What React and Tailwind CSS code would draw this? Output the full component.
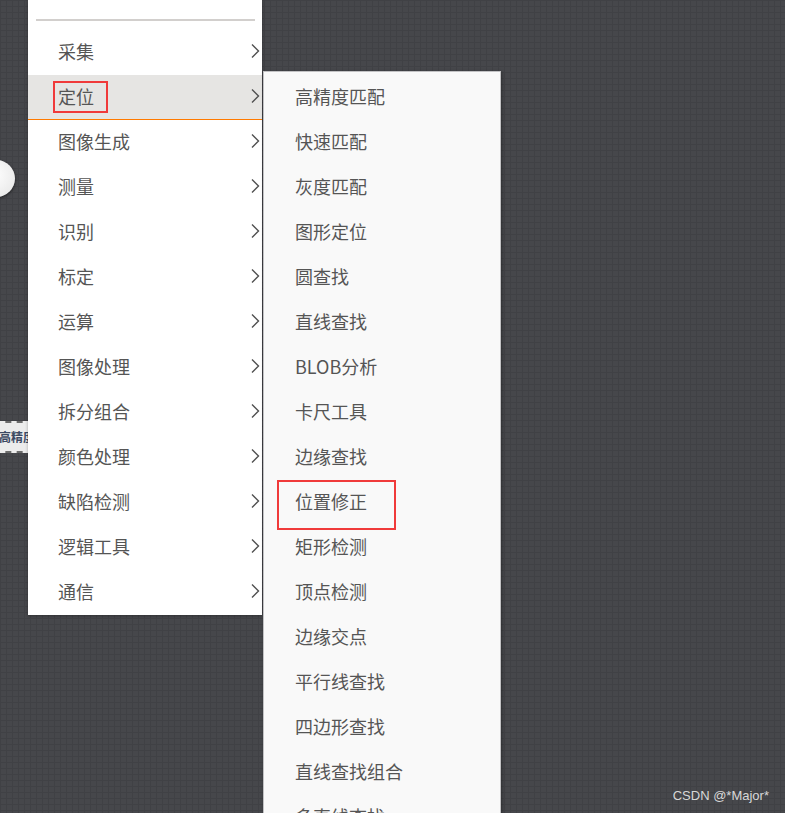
import React from 'react'

const mainItems = [
	'采集',
	'定位',
	'图像生成',
	'测量',
	'识别',
	'标定',
	'运算',
	'图像处理',
	'拆分组合',
	'颜色处理',
	'缺陷检测',
	'逻辑工具',
	'通信',
]

const subItems = [
	'高精度匹配',
	'快速匹配',
	'灰度匹配',
	'图形定位',
	'圆查找',
	'直线查找',
	'BLOB分析',
	'卡尺工具',
	'边缘查找',
	'位置修正',
	'矩形检测',
	'顶点检测',
	'边缘交点',
	'平行线查找',
	'四边形查找',
	'直线查找组合',
	'多直线查找',
]

const font = { fontFamily: '"Microsoft YaHei", "Noto Sans CJK SC", "Noto Sans", sans-serif' }

// thin ">" arrow used by the main menu rows
const Arrow = () => (
	<svg width="10" height="16" viewBox="0 0 10 16" className="shrink-0">
		<polyline points="2,1.5 8.5,8 2,14.5" fill="none" stroke="#505050" strokeWidth="1.4" />
	</svg>
)

const App = () => {
	return (
		<div
			className="relative w-[785px] h-[813px] overflow-hidden bg-[#46474b] bg-[linear-gradient(#404145_1px,transparent_1px),linear-gradient(90deg,#404145_1px,transparent_1px)] bg-[size:6px_6px]"
			style={font}
		>
			{/* canvas node: circle */}
			<div className="absolute left-[-22px] top-[160px] w-[37px] h-[37px] rounded-full bg-[radial-gradient(circle_at_40%_40%,#ffffff,#e4e4e4)] shadow-[0_1px_3px_rgba(0,0,0,0.6)]" />

			{/* canvas node: dashed box */}
			<div className="absolute left-[-6px] top-[421px] w-[40px] h-[32px] bg-[#ececec] border-y-2 border-dashed border-[#6b6b6b] flex items-center pl-[5px]">
				<span className="text-[12px] font-bold text-[#3c4a63] whitespace-nowrap leading-none">高精度</span>
			</div>

			{/* main menu */}
			<div className="absolute left-[28px] top-0 w-[234px] bg-white shadow-[0_1px_3px_rgba(0,0,0,0.3)]">
				<div className="h-[30px] pt-[19px] pr-[7px] pl-[8px]">
					<div className="h-[2px] bg-[#d2cfcd]" />
				</div>
				{mainItems.map((item, i) => (
					<div
						key={item}
						className={`h-[45px] flex items-center justify-between pl-[30px] pr-[2px] pb-[3px] text-[18px] text-[#555555] ${
							i === 1 ? 'bg-[#e6e5e3] border-b border-[#ff7a00]' : ''
						}`}
					>
						<span className="leading-none">{item}</span>
						<Arrow />
					</div>
				))}
			</div>

			{/* sub menu */}
			<div className="absolute left-[263px] top-[71px] w-[238px] h-[760px] bg-[#f9f9f9] border border-[#c2c2c4] shadow-[1px_1px_3px_rgba(0,0,0,0.35)] pt-[3px]">
				{subItems.map((item) => (
					<div key={item} className="h-[45px] flex items-center pl-[31px] pb-[3px] text-[18px] text-[#555555]">
						<span className="leading-none">{item}</span>
					</div>
				))}
			</div>

			{/* annotations */}
			<div className="absolute left-[53px] top-[81px] w-[55px] h-[32px] border-2 border-[#f03a3a]" />
			<div className="absolute left-[277px] top-[480px] w-[119px] h-[50px] border-2 border-[#f03a3a]" />

			{/* watermark */}
			<div
				className="absolute right-[16px] top-[789px] text-[13px] text-[#d8d8d8] leading-none"
				style={{ fontFamily: '"Liberation Sans", Arial, sans-serif' }}
			>
				CSDN @*Major*
			</div>
		</div>
	)
}

export default App
